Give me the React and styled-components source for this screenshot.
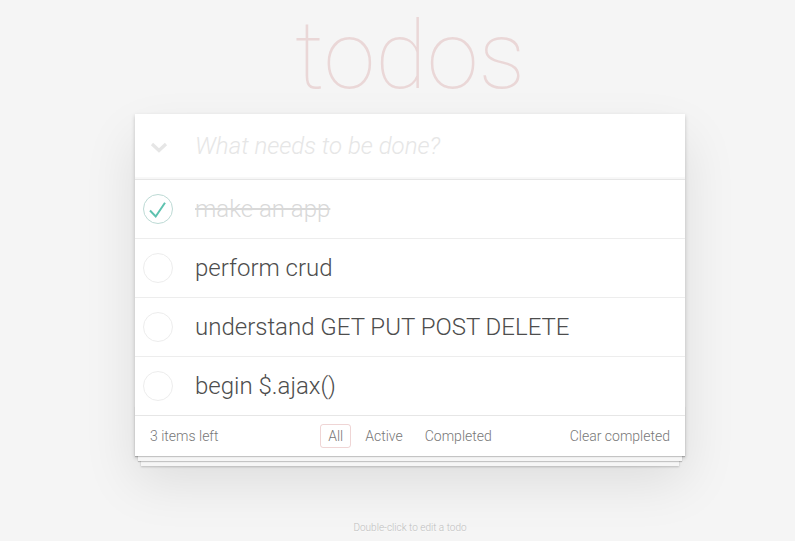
import React from "react";
import styled, { createGlobalStyle } from "styled-components";

const Global = createGlobalStyle`
  html, body { margin: 0; padding: 0; }
  body {
    background: #f5f5f5;
    color: #4d4d4d;
    font-family: Roboto, "Liberation Sans", Arial, sans-serif;
    font-weight: 300;
    font-size: 14px;
    line-height: 1.4em;
    -webkit-font-smoothing: antialiased;
  }
`;

const Page = styled.div`
  width: 550px;
  margin: 0 0 0 135px;
`;

const Title = styled.h1`
  margin: 0;
  padding: 1px 0 3px;
  height: 110px;
  line-height: 110px;
  font-size: 94px;
  font-weight: 100;
  text-align: center;
  color: rgba(175, 47, 47, 0.15);
  font-family: Roboto, "Liberation Sans", sans-serif;
  text-rendering: optimizeLegibility;
`;

const App = styled.section`
  position: relative;
  background: #fff;
  box-shadow: 0 2px 4px 0 rgba(0, 0, 0, 0.2), 0 25px 50px 0 rgba(0, 0, 0, 0.1);
`;

const Header = styled.header`
  display: flex;
  align-items: center;
  height: 65px;
  box-shadow: inset 0 -2px 1px rgba(0, 0, 0, 0.03);
`;

const ToggleAll = styled.div`
  width: 48px;
  flex: none;
  display: flex;
  justify-content: center;
  align-items: center;
  padding-top: 2px;
`;

const NewTodo = styled.input`
  flex: 1;
  border: 0;
  outline: none;
  background: transparent;
  margin: 0 0 0 12px;
  padding: 1px 16px 0 0;
  font-family: inherit;
  font-weight: 300;
  font-size: 24px;
  line-height: 1.4em;
  color: #4d4d4d;
  caret-color: #333;
  &::placeholder {
    font-style: italic;
    font-weight: 300;
    color: #e6e6e6;
  }
`;

const List = styled.ul`
  margin: 0;
  padding: 0;
  list-style: none;
  border-top: 1px solid #e6e6e6;
`;

const Item = styled.li`
  display: flex;
  align-items: center;
  height: 58px;
  border-bottom: 1px solid #ededed;
  &:last-child { border-bottom: none; }
`;

const Toggle = styled.span`
  position: relative;
  flex: none;
  box-sizing: border-box;
  width: 30px;
  height: 30px;
  margin-left: 8px;
  border-radius: 50%;
  border: 1px solid ${(p) => (p.$done ? "#bddad5" : "#ededed")};
`;

const CheckMark = styled.svg`
  position: absolute;
  left: -1px;
  top: -1px;
`;

const Label = styled.label`
  flex: 1;
  padding: 0 15px 0 22px;
  font-size: 24px;
  line-height: 1.2;
  color: ${(p) => (p.$done ? "#d9d9d9" : "#4d4d4d")};
  text-decoration: ${(p) => (p.$done ? "line-through" : "none")};
  white-space: nowrap;
`;

const Footer = styled.footer`
  position: relative;
  display: grid;
  grid-template-columns: 1fr auto 1fr;
  grid-template-rows: 20px;
  align-items: center;
  height: 20px;
  padding: 10px 15px;
  border-top: 1px solid #e6e6e6;
  color: #777;
  font-size: 14px;
  line-height: 20px;
  &::before {
    content: "";
    position: absolute;
    right: 0;
    bottom: 0;
    left: 0;
    height: 50px;
    overflow: hidden;
    box-shadow: 0 1px 1px rgba(0, 0, 0, 0.2), 0 8px 0 -3px #f6f6f6,
      0 9px 1px -3px rgba(0, 0, 0, 0.2), 0 16px 0 -6px #f6f6f6,
      0 17px 2px -6px rgba(0, 0, 0, 0.2);
    pointer-events: none;
  }
`;

const Count = styled.span`
  justify-self: start;
`;

const Filters = styled.ul`
  display: flex;
  margin: 0;
  padding: 0;
  list-style: none;
`;

const FilterLink = styled.a`
  display: block;
  margin: 3px;
  padding: 3px 7px;
  line-height: 16px;
  color: inherit;
  text-decoration: none;
  border: 1px solid ${(p) => (p.$selected ? "rgba(175, 47, 47, 0.2)" : "transparent")};
  border-radius: 3px;
`;

const Clear = styled.span`
  justify-self: end;
`;

const Info = styled.footer`
  margin: 67px auto 0;
  color: #bfbfbf;
  font-size: 10px;
  line-height: 1;
  text-align: center;
  text-shadow: 0 1px 0 rgba(255, 255, 255, 0.5);
`;

const todos = [
  { text: "make an app", done: true },
  { text: "perform crud", done: false },
  { text: "understand GET PUT POST DELETE", done: false },
  { text: "begin $.ajax()", done: false },
];

const Check = () => (
  <CheckMark width="30" height="30" viewBox="0 0 30 30">
    <path d="M7 16.5 L12.7 22.5 L22 8.7" fill="none" stroke="#5dc2af" strokeWidth="2" />
  </CheckMark>
);

const Chevron = () => (
  <svg width="18" height="12" viewBox="0 0 18 12">
    <path d="M2 2 L9 8.5 L16 2" fill="none" stroke="#e6e6e6" strokeWidth="3.2" />
  </svg>
);

export default function AppRoot() {
  return (
    <>
      <Global />
      <Page>
        <Title>todos</Title>
        <App>
          <Header>
            <ToggleAll>
              <Chevron />
            </ToggleAll>
            <NewTodo autoFocus placeholder="What needs to be done?" />
          </Header>
          <List>
            {todos.map((t) => (
              <Item key={t.text}>
                <Toggle $done={t.done}>{t.done && <Check />}</Toggle>
                <Label $done={t.done}>{t.text}</Label>
              </Item>
            ))}
          </List>
          <Footer>
            <Count>3 items left</Count>
            <Filters>
              <li><FilterLink $selected>All</FilterLink></li>
              <li><FilterLink>Active</FilterLink></li>
              <li><FilterLink>Completed</FilterLink></li>
            </Filters>
            <Clear>Clear completed</Clear>
          </Footer>
        </App>
        <Info>Double-click to edit a todo</Info>
      </Page>
    </>
  );
}
